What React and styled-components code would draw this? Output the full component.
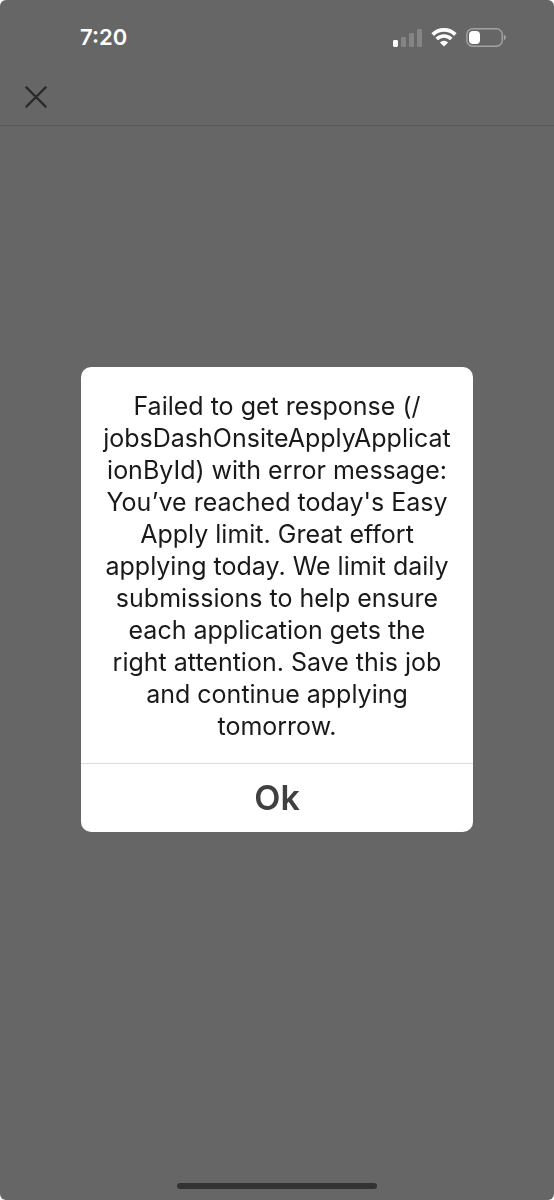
import React from 'react'
import styled, { createGlobalStyle } from "styled-components";

const messageLines = [
    "Failed to get response (/",
    "jobsDashOnsiteApplyApplicat",
    "ionById) with error message:",
    "You’ve reached today's Easy",
    "Apply limit. Great effort",
    "applying today. We limit daily",
    "submissions to help ensure",
    "each application gets the",
    "right attention. Save this job",
    "and continue applying",
    "tomorrow.",
];

function SignalIcon() {
    return (
    <svg width="29" height="19" viewBox="0 0 29 19" aria-hidden="true">
        <rect x="0" y="12" width="5" height="7" rx="1.4" fill="#fff" />
        <rect x="8" y="9" width="5" height="10" rx="1.4" fill="#858585" />
        <rect x="16" y="5" width="5" height="14" rx="1.4" fill="#858585" />
        <rect x="24" y="1" width="5" height="18" rx="1.4" fill="#858585" />
    </svg>
    );
}

function WifiIcon() {
    return (
    <svg width="26" height="19" viewBox="0 0 26 19" fill="none" stroke="#fff" aria-hidden="true">
        <path d="M1.7 6.6a16 16 0 0 1 22.6 0" strokeWidth="3.8" />
        <path d="M5.7 11.1a10.3 10.3 0 0 1 14.6 0" strokeWidth="3.6" />
        <path d="M13 18.6l-4.1-4.1a5.8 5.8 0 0 1 8.2 0z" fill="#fff" stroke="none" />
    </svg>
    );
}

function BatteryIcon() {
    return (
    <svg width="40" height="19" viewBox="0 0 40 19" aria-hidden="true">
        <rect x="0.8" y="0.8" width="35.4" height="17.4" rx="5.8" fill="none" stroke="#a3a3a3" strokeWidth="1.4" />
        <rect x="3" y="3" width="11" height="13" rx="4" fill="#fff" />
        <path d="M37.8 6.4a3.4 3.4 0 0 1 0 6.2z" fill="#a3a3a3" />
    </svg>
    );
}

function App() {
    return (
    <>
        <GlobalStyle />
        <Screen>
            <StatusBar>
                <Time>7:20</Time>
                <StatusIcons>
                    <SignalIcon />
                    <WifiIcon />
                    <BatteryIcon />
                </StatusIcons>
            </StatusBar>
            <NavBar>
                <CloseButton type="button" aria-label="Close">
                    <svg width="22" height="22" viewBox="0 0 22 22" stroke="#2b2b2b" strokeWidth="2.2" strokeLinecap="round" aria-hidden="true">
                        <path d="M1.4 1.4l19.2 19.2M20.6 1.4L1.4 20.6" />
                    </svg>
                </CloseButton>
            </NavBar>
            <HomeIndicator />
        </Screen>
        <Overlay>
            <Dialog role="alertdialog" aria-modal="true" aria-describedby="message">
                <Message id="message">
                    {messageLines.map((line) => (
                        <Line key={line}>{line}</Line>
                    ))}
                </Message>
                <OkButton type="button">Ok</OkButton>
            </Dialog>
        </Overlay>
    </>
    );
}

const GlobalStyle = createGlobalStyle`
  * {
    box-sizing: border-box;
  }
  body {
    margin: 0;
    background: #fff;
    font-family: Inter, "Liberation Sans", sans-serif;
  }
`;

const Screen = styled.div`
  min-height: 100vh;
  display: flex;
  flex-direction: column;
  background: #666;
  border-radius: 6px;
`;

const StatusBar = styled.header`
  display: flex;
  justify-content: space-between;
  align-items: center;
  height: 76px;
  padding: 0 48px 2px 80px;
`;

const Time = styled.span`
  color: #fff;
  font-size: 22px;
  font-weight: 600;
  line-height: 28px;
`;

const StatusIcons = styled.div`
  display: flex;
  align-items: center;
  gap: 9px;
`;

const NavBar = styled.nav`
  display: flex;
  align-items: center;
  height: 50px;
  padding: 0 17px;
  border-bottom: 1px solid #595959;
`;

const CloseButton = styled.button`
  display: flex;
  padding: 8px;
  margin-bottom: 8px;
  border: none;
  background: none;
  cursor: pointer;
`;

const HomeIndicator = styled.div`
  width: 36%;
  height: 6px;
  margin: auto auto 11px;
  border-radius: 3px;
  background: #333;
`;

const Overlay = styled.div`
  position: fixed;
  inset: 0;
  display: flex;
  justify-content: center;
  align-items: center;
  padding: 0 81px 2px;
`;

const Dialog = styled.div`
  width: 100%;
  max-width: 480px;
  overflow: hidden;
  border-radius: 10px;
  background: #fff;
`;

const Message = styled.p`
  margin: 0;
  padding: 23px 16px 21px;
  color: #191919;
  font-size: 25px;
  line-height: 32px;
  text-align: center;
`;

const Line = styled.span`
  display: block;
  white-space: nowrap;
`;

const OkButton = styled.button`
  display: block;
  width: 100%;
  height: 69px;
  padding: 0;
  border: none;
  border-top: 1px solid #dcdcdc;
  background: none;
  color: #404040;
  font-family: inherit;
  font-size: 34px;
  font-weight: 600;
  line-height: 40px;
  cursor: pointer;
`;

export default App;
